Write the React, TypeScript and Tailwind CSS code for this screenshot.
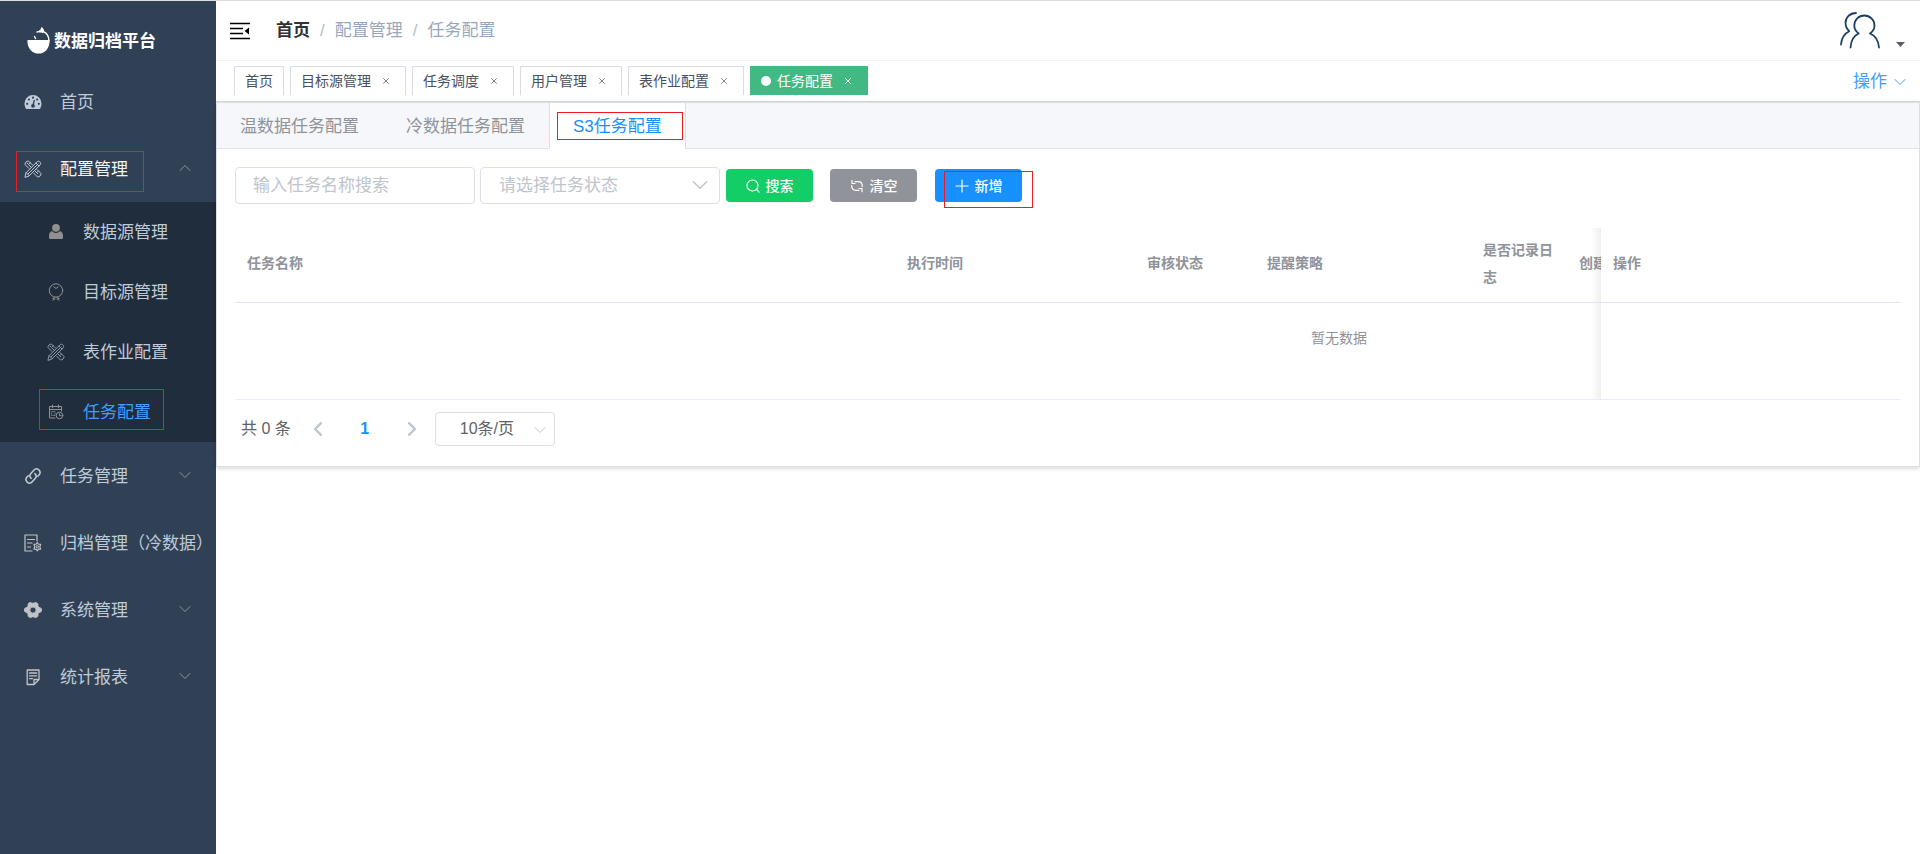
import { useState } from "react";
import type { ReactNode } from "react";

type IconProps = { className?: string };

function Svg({ className, children, box = "0 0 24 24" }: IconProps & { children: ReactNode; box?: string }) {
  return (
    <svg
      viewBox={box}
      className={className}
      fill="none"
      stroke="currentColor"
      strokeLinecap="round"
      strokeLinejoin="round"
      aria-hidden="true"
    >
      {children}
    </svg>
  );
}

function Chevron({ className }: IconProps) {
  return (
    <Svg className={className} box="0 0 12 12">
      <path d="M1 3.5 6 8.5 11 3.5" />
    </Svg>
  );
}

function LogoIcon() {
  return (
    <Svg className="mb-0.5 h-[27px] w-[23px] text-white" box="0 0 23 27">
      <path d="M0.5 13H22.5V15A11 11.5 0 0 1 0.5 15Z" fill="currentColor" stroke="none" />
      <path d="M16 4.500C20 6 22 9.500 22 14" strokeWidth="1.4" />
      <path d="M10 5C12.500 4.500 14 3 14.800 0.500L16.500 2.800L16 5.500C14 4.800 12 5 10 5Z" fill="currentColor" />
      <path d="M7.500 9.500 8.500 11.500" strokeWidth="1.400" />
    </Svg>
  );
}

function GaugeIcon({ className }: IconProps) {
  return (
    <Svg className={className} box="0 0 18 18">
      <path
        d="M9 2A8.5 8.5 0 0 0 .5 10.5C.5 12.400 1 14 1.800 15.500C2 15.900 2.300 16 2.700 16H15.300C15.700 16 16 15.900 16.200 15.500C17 14 17.500 12.400 17.500 10.500A8.500 8.500 0 0 0 9 2Z"
        fill="currentColor"
        stroke="none"
      />
      <g fill="#304156" stroke="none">
        <circle cx="9" cy="4.700" r="1.100" />
        <circle cx="4.900" cy="6.500" r="1.100" />
        <circle cx="13.100" cy="6.500" r="1.100" />
        <circle cx="3.200" cy="10.800" r="1.100" />
        <circle cx="14.800" cy="10.800" r="1.100" />
        <circle cx="9" cy="12.800" r="1.900" />
      </g>
      <path d="M9 12.500 10.200 7.500" stroke="#304156" strokeWidth="1.300" />
    </Svg>
  );
}

function ToolsIcon({ className }: IconProps) {
  return (
    <Svg className={className} box="0 0 18 18">
      <path d="M1 17 2 12.800 13 1.800C13.800 1 15 1 15.900 1.900C16.900 2.900 16.900 4.100 16.100 4.900L5.100 15.900Z" />
      <path d="M2.200 12.700 5.200 15.700M12 3 15 6M4 14 14 4" />
      <path d="M7.200 7.200 4.800 4.800M4.800 8.300 1 4.500C1 2.500 2.500 1 4.500 1L8.500 5M3.200 3.200 4.300 4.300M6.200 2.700 5.200 3.700" />
      <path d="M13 9.500 17 13.500C17 15.500 15.500 17 13.500 17L9.700 13.200M14.500 11 13.400 12.100M11.200 11.200 13.700 13.700" />
    </Svg>
  );
}

function UserIcon({ className }: IconProps) {
  return (
    <Svg className={className} box="0 0 18 18">
      <g fill="currentColor" stroke="none">
        <circle cx="9" cy="4.800" r="3.900" />
        <path d="M5 8C6 9.300 7.400 10 9 10S12 9.300 13 8C15 8.800 16 10.500 16 13V14.500C16 15.600 15.400 16 14.500 16H3.500C2.600 16 2 15.600 2 14.500V13C2 10.500 3 8.800 5 8Z" />
      </g>
    </Svg>
  );
}

function TargetIcon({ className }: IconProps) {
  return (
    <Svg className={className} box="0 0 18 18">
      <circle cx="9" cy="7.500" r="6.700" />
      <path d="M6.800 3.800 9 5.500 11.200 3.800M7.500 14 6 17.200M10.500 14 12 17.200M6 15.500 8 16.200M12 15.500 10 16.200" />
    </Svg>
  );
}

function CalendarIcon({ className }: IconProps) {
  return (
    <Svg className={className} box="0 0 18 18">
      <path d="M8 15H2.500V3.500H14.500V8M2.500 6.500H14.500M5.500 2V4.700M11.500 2V4.700" />
      <path d="M5 8.500H8V12.500H5Z" strokeWidth="0.600" />
      <circle cx="12.500" cy="12.500" r="3.300" />
      <path d="M12.500 10.800V12.700H14.200" />
    </Svg>
  );
}

function LinkIcon({ className }: IconProps) {
  return (
    <Svg className={className} box="0 0 18 18">
      <g strokeWidth="1.500" transform="rotate(-48 9 9)">
        <path d="M12 8.800C12 10.800 10.500 12.300 8.500 12.300H4.200C2.200 12.300 .6 10.800 .6 8.800S2.200 5.300 4.200 5.300H6" />
        <path d="M6 9.200C6 7.200 7.500 5.700 9.500 5.700H13.800C15.800 5.700 17.400 7.200 17.400 9.200S15.800 12.700 13.800 12.700H12" />
      </g>
    </Svg>
  );
}

function ArchiveIcon({ className }: IconProps) {
  return (
    <Svg className={className} box="0 0 18 18">
      <path d="M8 17H1V1H13V7M3.500 5.500H10.500M3.500 9H8M3.500 13H6.500" strokeWidth="1.200" />
      <circle cx="13.300" cy="12.700" r="1.200" />
      <path
        d="M13.300 8.500 14.500 10.300 16.700 10.300 15.800 12.700 16.700 15.100 14.500 15.100 13.300 16.900 12.100 15.100 9.900 15.100 10.800 12.700 9.900 10.300 12.100 10.300Z"
        strokeWidth="1.100"
      />
    </Svg>
  );
}

function GearIcon({ className }: IconProps) {
  return (
    <Svg className={className} box="0 0 18 18">
      <path
        d="M6.200 1.500C7 1.200 7.300 2.300 9 2.300S11 1.200 11.800 1.500L13.700 2.600C14.300 3.200 13.500 4 14.300 5.500C15.100 6.900 16.500 6.700 17.200 7.400C17.600 8.500 17.600 9.500 17.200 10.600C16.500 11.300 15.100 11.100 14.300 12.500C13.500 14 14.300 14.800 13.700 15.400L11.800 16.500C11 16.800 10.700 15.700 9 15.700S7 16.800 6.200 16.500L4.300 15.400C3.700 14.800 4.500 14 3.700 12.500C2.900 11.100 1.500 11.300.8 10.600C.4 9.500.4 8.500.8 7.400C1.500 6.700 2.900 6.900 3.700 5.500C4.500 4 3.700 3.200 4.300 2.600ZM9 5.800A3.200 3.200 0 1 0 9 12.200A3.200 3.200 0 1 0 9 5.800Z"
        fill="currentColor"
        fillRule="evenodd"
      />
    </Svg>
  );
}

function ReportIcon({ className }: IconProps) {
  return (
    <Svg className={className} box="0 0 18 18">
      <path d="M10 16.500H3.200V2H15V11.500L10 16.500V11.500H15" strokeWidth="1.300" />
      <path d="M5.500 5H12.700M5.500 7.800H12.700M5.500 10.600H8.500" strokeWidth="1.300" />
    </Svg>
  );
}

function AvatarIcon() {
  return (
    <Svg className="h-[37px] w-[41px] text-[#1b4064]" box="0 0 41 37">
      <g strokeWidth="1.800">
        <path d="M10.500 35.500C11 29 14 23.500 18.700 21.500C15.700 19.500 14.300 16.500 14.300 13.500C14.300 8 18.700 3.500 24.300 3.500S34.500 8 34.500 13.500C34.500 16.500 33 19.500 30 21.500C35 23.500 38.500 29 39 35.500" />
        <path d="M1 32.500C1.500 26.500 4.500 21.500 9.200 19.200C7 17 5.500 14.200 5.500 11C5.500 5.500 10 1 16 1" />
      </g>
    </Svg>
  );
}

function FoldIcon() {
  return (
    <Svg className="h-[18px] w-5 text-black" box="0 0 20 18">
      <path d="M0 1.500H20M0 6.500H13M0 11.500H13M0 16.500H20" strokeWidth="1.500" strokeLinecap="butt" />
      <path d="M19 5.500V12.500L14.500 9Z" fill="currentColor" stroke="none" />
    </Svg>
  );
}

function SearchIcon() {
  return (
    <Svg className="size-[14px]" box="0 0 14 14">
      <circle cx="6.500" cy="6.500" r="5.500" strokeWidth="1.200" />
      <path d="M10.500 10.500 13 13" strokeWidth="1.200" />
    </Svg>
  );
}

function RefreshIcon() {
  return (
    <Svg className="size-[14px]" box="0 0 14 14">
      <path d="M12.300 7.500C12.300 4.600 10.500 2.700 8 2.700H5M1.700 6.500C1.700 9.400 3.500 11.300 6 11.300H9" strokeWidth="1.200" />
      <path d="M2 1.300V4.500H5M12 12.700V9.500H9" strokeWidth="1.200" />
    </Svg>
  );
}

function PlusIcon() {
  return (
    <Svg className="size-[14px]" box="0 0 14 14">
      <path d="M7 1V13M1 7H13" strokeWidth="1.200" />
    </Svg>
  );
}

type MenuEntry = {
  label: string;
  Icon: (p: IconProps) => ReactNode;
  expandable?: boolean;
  iconClass: string;
};

const mainMenu: MenuEntry[] = [
  { label: "任务管理", Icon: LinkIcon, expandable: true, iconClass: "text-[#c3ccd6]" },
  { label: "归档管理（冷数据）", Icon: ArchiveIcon, iconClass: "text-[#c0c4c8]" },
  { label: "系统管理", Icon: GearIcon, expandable: true, iconClass: "text-[#c0c4c8]" },
  { label: "统计报表", Icon: ReportIcon, expandable: true, iconClass: "text-[#c0c4c8]" },
];

const subMenu: MenuEntry[] = [
  { label: "数据源管理", Icon: UserIcon, iconClass: "text-[#909090]" },
  { label: "目标源管理", Icon: TargetIcon, iconClass: "text-[#909399]" },
  { label: "表作业配置", Icon: ToolsIcon, iconClass: "text-[#909cac]" },
];

const rowClass = "relative flex h-[67px] w-full items-center whitespace-nowrap pl-6 pr-[25px] pt-0.5 text-[17px]";
const subRowClass = "relative flex h-[60px] items-center pl-[47px] pt-0.5 text-[17px]";
const iconBox = "mb-0.5 mr-[18px] size-[18px] shrink-0";

function MenuRow({ entry }: { entry: MenuEntry }) {
  const { label, Icon, expandable, iconClass } = entry;
  return (
    <a href="#" className={`${rowClass} text-[#bfcbd9]`}>
      <Icon className={`${iconBox} ${iconClass}`} />
      {label}
      {expandable && <Chevron className="mb-1 ml-auto size-3 text-[#909399]" />}
    </a>
  );
}

function Sidebar() {
  return (
    <aside className="w-[216px] shrink-0 overflow-hidden bg-[#304156]">
      <div className="flex h-[67px] items-center gap-1 pl-[27px] pt-[14px] text-[17px] font-bold text-white">
        <LogoIcon />
        <span>数据归档平台</span>
      </div>
      <nav>
        <MenuRow entry={{ label: "首页", Icon: GaugeIcon, iconClass: "text-[#bfcbd9]" }} />
        <button type="button" className={`${rowClass} text-[#f4f4f5]`}>
          <ToolsIcon className={`${iconBox} text-[#bfcbd9]`} />
          配置管理
          <Chevron className="mb-1 ml-auto size-3 rotate-180 text-[#909399]" />
          <span className="absolute left-4 top-4 h-[41px] w-32 border border-[#ed1c24]" />
        </button>
        <div className="bg-[#1f2d3d]">
          {subMenu.map(({ label, Icon, iconClass }) => (
            <a key={label} href="#" className={`${subRowClass} text-[#bfcbd9]`}>
              <Icon className={`${iconBox} ${iconClass}`} />
              {label}
            </a>
          ))}
          <a href="#" aria-current="page" className={`${subRowClass} text-[#409eff]`}>
            <CalendarIcon className={`${iconBox} text-[#909399]`} />
            任务配置
            <span className="absolute left-[39px] top-[7px] h-[41px] w-[125px] border border-[#ed1c24]" />
          </a>
        </div>
        {mainMenu.map((entry) => (
          <MenuRow key={entry.label} entry={entry} />
        ))}
      </nav>
    </aside>
  );
}

function Navbar() {
  return (
    <header className="flex h-[60px] items-center border-b border-[#f2f2f2] pl-[14px] pr-[15px]">
      <button type="button" aria-label="折叠菜单" className="mr-[26px]">
        <FoldIcon />
      </button>
      <nav aria-label="面包屑" className="flex items-center gap-[10px] text-[17px] text-[#97a8be]">
        <a href="#" className="font-bold text-[#303133]">首页</a>
        <span className="text-[#b4bccc]">/</span>
        <span>配置管理</span>
        <span className="text-[#b4bccc]">/</span>
        <span>任务配置</span>
      </nav>
      <button type="button" aria-label="用户" className="ml-auto flex items-end gap-[15px]">
        <AvatarIcon />
        <svg viewBox="0 0 9 5" className="mb-0.5 h-[5px] w-[9px]" aria-hidden="true">
          <path d="M0 0H9L4.500 5Z" fill="#5a5e66" />
        </svg>
      </button>
    </header>
  );
}

const tags = ["目标源管理", "任务调度", "用户管理", "表作业配置"];

function CloseTag({ label, className }: { label: string; className: string }) {
  return (
    <button type="button" aria-label={`关闭${label}`} className={`ml-[5px] flex w-[19px] justify-center ${className}`}>
      <Svg className="size-[6px]" box="0 0 6 6">
        <path d="M.5.5 5.500 5.500M5.500.5.5 5.500" />
      </Svg>
    </button>
  );
}

function TagsBar() {
  const box = "flex h-[29px] items-center border border-b-0 px-[10px]";
  return (
    <div className="flex h-[41px] items-start gap-[6px] border-b border-[#d8dce5] pl-[18px] pr-[14px] pt-[5px] text-sm">
      <a href="#" className={`${box} border-[#d8dce5] text-[#495060]`}>首页</a>
      {tags.map((tag) => (
        <div key={tag} className={`${box} border-[#d8dce5] text-[#495060]`}>
          <a href="#">{tag}</a>
          <CloseTag label={tag} className="text-[#80858f]" />
        </div>
      ))}
      <div className={`${box} border-[#42b983] bg-[#42b983] text-white`}>
        <span className="mr-[6px] size-[10px] rounded-full bg-white" />
        <a href="#">任务配置</a>
        <CloseTag label="任务配置" className="text-white" />
      </div>
      <button type="button" className="ml-auto flex h-8 items-center gap-[7px] text-[17px] text-[#409eff]">
        操作
        <Chevron className="size-3" />
      </button>
    </div>
  );
}

function TabStrip() {
  return (
    <div role="tablist" className="flex h-[46px] border-b border-[#dfe4ed] bg-[#f5f7fa] text-[17px] text-[#909399]">
      <button type="button" role="tab" aria-selected="false" className="pl-[23px] pr-6 pt-0.5">温数据任务配置</button>
      <button type="button" role="tab" aria-selected="false" className="pl-[23px] pr-6 pt-0.5">冷数据任务配置</button>
      <button
        type="button"
        role="tab"
        aria-selected="true"
        className="relative -mb-px border-x border-[#dcdfe6] bg-white px-[23px] pt-px text-[#1890ff]"
      >
        S3任务配置
        <span className="absolute left-[7px] top-[9px] h-7 w-[126px] border border-[#ed1c24]" />
      </button>
    </div>
  );
}

function Filters() {
  const button = "flex h-[33px] w-[87px] items-center justify-center gap-[6px] rounded-[4px] text-sm font-medium text-white";
  return (
    <form className="flex items-center" onSubmit={(e) => e.preventDefault()}>
      <input
        type="text"
        aria-label="任务名称"
        placeholder="输入任务名称搜索"
        className="mr-[5px] h-[37px] w-60 rounded-[4px] border border-[#dcdfe6] px-[17px] text-[17px] text-[#606266] placeholder:text-[#c0c4cc]"
      />
      <div className="relative mr-[6px]">
        <select
          aria-label="任务状态"
          className="h-[37px] w-60 appearance-none rounded-[4px] border border-[#dcdfe6] bg-white px-[18px] text-[17px] text-[#c0c4cc]"
        >
          <option>请选择任务状态</option>
        </select>
        <Chevron className="pointer-events-none absolute right-3 top-[10px] size-4 text-[#c0c4cc]" />
      </div>
      <button type="submit" className={`${button} mr-[17px] bg-[#13ce66]`}>
        <SearchIcon />
        搜索
      </button>
      <button type="reset" className={`${button} mr-[18px] bg-[#909399]`}>
        <RefreshIcon />
        清空
      </button>
      <div className="relative">
        <button type="button" className={`${button} bg-[#1890ff]`}>
          <PlusIcon />
          新增
        </button>
        <span className="pointer-events-none absolute left-[9px] top-[2px] h-[37px] w-[89px] border border-[#ed1c24]" />
      </div>
    </form>
  );
}

const columns = [
  { title: "任务名称", width: "w-[660px]" },
  { title: "执行时间", width: "w-[240px]" },
  { title: "审核状态", width: "w-[120px]" },
  { title: "提醒策略", width: "w-[216px]" },
  { title: "是否记录日志", width: "w-[96px]" },
  { title: "创建", width: "w-[576px]" },
];

const headCell = "border-b border-[#dfe6ec] px-3 pb-[3px] font-bold leading-[27px]";
const pinned =
  "sticky right-0 bg-white before:absolute before:inset-y-0 before:-left-[10px] before:w-[10px] before:bg-linear-to-r before:from-transparent before:to-black/6";

function TaskTable() {
  return (
    <div className="mt-6 overflow-hidden border-b border-[#ebeef5]">
      <table className="w-[2208px] table-fixed border-separate border-spacing-0 text-left text-sm text-[#909399]">
        <thead>
          <tr className="h-[75px]">
            {columns.map((column) => (
              <th key={column.title} className={`${column.width} ${headCell}`}>
                {column.title}
              </th>
            ))}
            <th className={`${pinned} ${headCell} w-[300px]`}>操作</th>
          </tr>
        </thead>
        <tbody>
          <tr className="h-24">
            <td colSpan={6} className="pb-[26px] pl-[300px] text-center">暂无数据</td>
            <td className={pinned} />
          </tr>
        </tbody>
      </table>
    </div>
  );
}

function Pagination() {
  const [size, setSize] = useState("10");
  return (
    <div className="flex items-center pl-[6px] pt-3 text-[16px] text-[#606266]">
      <span>共 0 条</span>
      <button type="button" disabled aria-label="上一页" className="ml-5 text-[#c0c4cc]">
        <Chevron className="size-[14px] rotate-90 stroke-2" />
      </button>
      <button type="button" aria-current="page" className="mx-[33px] w-[14px] font-bold text-[#1890ff]">1</button>
      <button type="button" disabled aria-label="下一页" className="text-[#c0c4cc]">
        <Chevron className="size-[14px] -rotate-90 stroke-2" />
      </button>
      <div className="relative ml-4">
        <select
          aria-label="每页条数"
          value={size}
          onChange={(e) => setSize(e.target.value)}
          className="h-[34px] w-[120px] appearance-none rounded-[4px] border border-[#dcdfe6] bg-white pl-6 pr-8 text-[16px] text-[#606266]"
        >
          <option value="10">10条/页</option>
        </select>
        <Chevron className="pointer-events-none absolute right-[9px] top-3 size-3 text-[#c0c4cc]" />
      </div>
    </div>
  );
}

export default function App() {
  return (
    <div className="flex min-h-screen border-t border-[#dcdcdc] bg-white font-['Liberation_Sans','Noto_Sans_CJK_SC',sans-serif]">
      <Sidebar />
      <div className="min-w-0 flex-1">
        <Navbar />
        <TagsBar />
        <main className="border border-[#dcdfe6] shadow-[0_2px_4px_rgba(0,0,0,0.12),0_0_6px_rgba(0,0,0,0.04)]">
          <TabStrip />
          <section className="px-[18px] pb-5 pt-[18px]">
            <Filters />
            <TaskTable />
            <Pagination />
          </section>
        </main>
      </div>
    </div>
  );
}
